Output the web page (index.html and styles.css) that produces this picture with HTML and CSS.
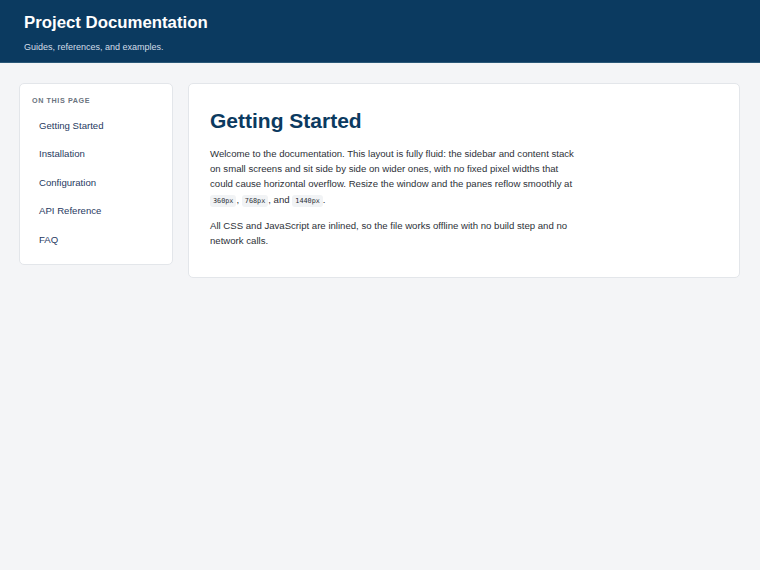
FILE: index.html
```html
<!DOCTYPE html>
<html lang="en">
<head>
    <meta charset="UTF-8">
    <meta name="viewport" content="width=device-width, initial-scale=1.0">
    <title>Project Documentation</title>
    <link rel="stylesheet" href="styles.css">
</head>
<body>

<header class="site-header">
    <h1>Project Documentation</h1>
    <p>Guides, references, and examples.</p>
</header>

<main class="layout">
    <!-- Sidebar navigation -->
    <aside class="sidebar">
        <h2>On this page</h2>
        <nav>
            <a href="#getting-started">Getting Started</a>
            <a href="#installation">Installation</a>
            <a href="#configuration">Configuration</a>
            <a href="#api">API Reference</a>
            <a href="#faq">FAQ</a>
        </nav>
    </aside>

    <!-- Main content -->
    <article class="content" id="getting-started">
        <h2>Getting Started</h2>
        <p>Welcome to the documentation. This layout is fully fluid: the sidebar and content stack on small screens and sit side by side on wider ones, with no fixed pixel widths that could cause horizontal overflow. Resize the window and the panes reflow smoothly at <code>360px</code>, <code>768px</code>, and <code>1440px</code>.</p>
        <p>All CSS and JavaScript are inlined, so the file works offline with no build step and no network calls.</p>
    </article>
</main>

</body>
</html>
```

FILE: styles.css
```css
/* Global */
body {
    font-family: "Liberation Sans", Arial, sans-serif;
    margin: 0;
    padding: 0;
    background-color: #f4f5f7;
    color: #2d3138;
}

/* Header */
.site-header {
    background-color: #0b3a60;
    color: #fff;
    padding: 13px 24px 9px;
    border-bottom: 1px solid #2a5878;
}

.site-header h1 {
    margin: 0;
    font-size: 16.8px;
    line-height: 20px;
}

.site-header p {
    margin: 7.5px 0 0;
    font-size: 9px;
    line-height: 12px;
    color: #d3dde8;
}

/* Layout */
.layout {
    display: flex;
    align-items: flex-start;
    gap: 15px;
    padding: 20px 20px 20px 19px;
}

.sidebar,
.content {
    background-color: #fff;
    border: 1px solid #e3e6ea;
    border-radius: 5px;
}

/* Sidebar */
.sidebar {
    width: 154px;
    flex-shrink: 0;
    box-sizing: border-box;
    padding: 12px 0 10px 12px;
}

.sidebar h2 {
    margin: 0 0 7px;
    font-size: 7.2px;
    line-height: 9px;
    text-transform: uppercase;
    letter-spacing: 0.6px;
    color: #6b7480;
}

.sidebar nav a {
    display: block;
    padding: 7px;
    font-size: 9.6px;
    line-height: 14.5px;
    color: #1f3a5f;
    text-decoration: none;
}

/* Content */
.content {
    flex: 1;
    padding: 24px 21px 29px;
}

.content h2 {
    margin: 0 0 13px;
    font-size: 21px;
    line-height: 25px;
    color: #0b3a60;
}

.content p {
    max-width: 365px;
    margin: 0 0 8.6px;
    font-size: 9.6px;
    line-height: 15.36px;
}

.content p:last-child {
    margin-bottom: 0;
}

code {
    font-family: "DejaVu Sans Mono", "Liberation Mono", monospace;
    font-size: 6.8px;
    background-color: #f1f3f5;
    padding: 2px 3px;
    border-radius: 3px;
}
```
